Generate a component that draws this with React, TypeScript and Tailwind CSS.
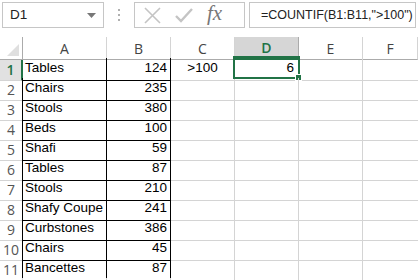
import React from "react";

const rows: [string, number][] = [
  ["Tables", 124],
  ["Chairs", 235],
  ["Stools", 380],
  ["Beds", 100],
  ["Shafi", 59],
  ["Tables", 87],
  ["Stools", 210],
  ["Shafy Coupe", 241],
  ["Curbstones", 386],
  ["Chairs", 45],
  ["Bancettes", 87],
  ["", 0],
];

const cols = ["A", "B", "C", "D", "E", "F"];
const grid = "grid grid-cols-[23px_84px_64px_64px_64px_64px_1fr]";
const cellFont = { fontFamily: "'Liberation Sans', Arial, sans-serif" };
const uiFont = { fontFamily: "'Open Sans', sans-serif" };

function Toolbar() {
  return (
    <div className="h-[37px] flex items-start pt-[2px] pl-[2px] pr-[2px]">
      {/* name box */}
      <div className="w-[102px] h-[26px] border border-[#c6c6c6] flex items-center pl-[7px] pr-[7px] text-[13.5px] text-[#222]">
        <span style={cellFont}>D1</span>
        <svg className="ml-auto" width="9" height="5" viewBox="0 0 9 5">
          <path d="M0 0h9L4.5 5z" fill="#777" />
        </svg>
      </div>
      <div className="w-[30px] h-[26px] flex flex-col items-center justify-center gap-[3px]">
        <div className="w-[2px] h-[2px] bg-[#b0b0b0]" />
        <div className="w-[2px] h-[2px] bg-[#b0b0b0]" />
        <div className="w-[2px] h-[2px] bg-[#b0b0b0]" />
      </div>
      {/* cancel / enter / fx */}
      <div className="w-[111px] h-[26px] border border-[#c6c6c6] flex items-center pl-[9px] gap-[14px]">
        <svg width="17" height="17" viewBox="0 0 17 17">
          <path d="M1 1l15 15M16 1L1 16" stroke="#c4c4c4" strokeWidth="1.6" />
        </svg>
        <svg width="18" height="15" viewBox="0 0 18 15">
          <path d="M1 8l5 5L17 1" stroke="#c4c4c4" strokeWidth="2.4" fill="none" />
        </svg>
        <span
          className="text-[21px] italic text-[#777] leading-none -mt-[3px]"
          style={{ fontFamily: "'Liberation Serif', serif" }}
        >
          fx
        </span>
      </div>
      <div className="w-[4px]" />
      <div
        className="flex-1 h-[26px] border border-[#c6c6c6] flex items-center pl-[11px] text-[12.5px] text-[#222] whitespace-nowrap overflow-hidden"
        style={cellFont}
      >
        =COUNTIF(B1:B11,"&gt;100")
      </div>
    </div>
  );
}

export default function App() {
  return (
    <div className="w-[418px] h-[280px] bg-white overflow-hidden relative">
      <Toolbar />
      {/* column headers */}
      <div className={`${grid} h-[21px] text-[14px] text-[#444]`} style={uiFont}>
        <div className="border-r border-b border-[#ababab] relative bg-white">
          <svg className="absolute right-[3px] bottom-[3px]" width="12" height="12" viewBox="0 0 12 12">
            <path d="M12 0v12H0z" fill="#dfdfdf" />
          </svg>
        </div>
        {cols.map((c) =>
          c === "D" ? (
            <div
              key={c}
              className="border-r border-[#ababab] bg-[#d6d6d6] border-b-2 border-b-[#217346] flex items-center justify-center font-semibold text-[#217346]"
            >
              {c}
            </div>
          ) : (
            <div key={c} className="border-r border-b border-[#d4d4d4] border-b-[#ababab] flex items-center justify-center">
              {c}
            </div>
          )
        )}
      </div>
      {/* rows */}
      {rows.map(([name, val], i) => {
        const inData = i < 11;
        const first = i === 0;
        return (
          <div key={i} className={`${grid} h-[20px] text-[13.5px] whitespace-nowrap`}>
            <div
              className={`border-b border-[#d4d4d4] flex items-center justify-center text-[14px] ${
                first
                  ? "bg-[#e1e1e1] text-[#217346] border-r-2 border-r-[#217346] font-semibold"
                  : inData
                  ? "text-[#555] border-r border-r-black"
                  : "text-[#555] border-r border-r-[#d4d4d4]"
              }`}
              style={uiFont}
            >
              {inData ? i + 1 : ""}
            </div>
            <div
              className={`border-r border-b flex items-end pb-[2px] pl-[2px] text-black overflow-hidden ${
                inData ? "border-black" : "border-[#d4d4d4]"
              }`}
              style={cellFont}
            >
              {name}
            </div>
            <div
              className={`border-r border-b flex items-end justify-end pb-[2px] pr-[3px] text-black ${
                inData ? "border-black" : "border-[#d4d4d4]"
              }`}
              style={cellFont}
            >
              {inData ? val : ""}
            </div>
            <div className="border-r border-b border-[#d4d4d4] flex items-end justify-center pb-[2px] text-black" style={cellFont}>
              {first ? ">100" : ""}
            </div>
            <div className="border-r border-b border-[#d4d4d4] flex items-end justify-end pb-[2px] pr-[4px] text-black relative" style={cellFont}>
              {first ? "6" : ""}
              {first && (
                <div className="absolute -left-[2px] -top-[2px] w-[67px] h-[23px] border-2 border-[#217346]">
                  <div className="absolute -right-[4px] -bottom-[4px] w-[7px] h-[7px] bg-[#217346] border border-white" />
                </div>
              )}
            </div>
            <div className="border-r border-b border-[#d4d4d4]" />
            <div className="border-b border-[#d4d4d4]" />
          </div>
        );
      })}
    </div>
  );
}
